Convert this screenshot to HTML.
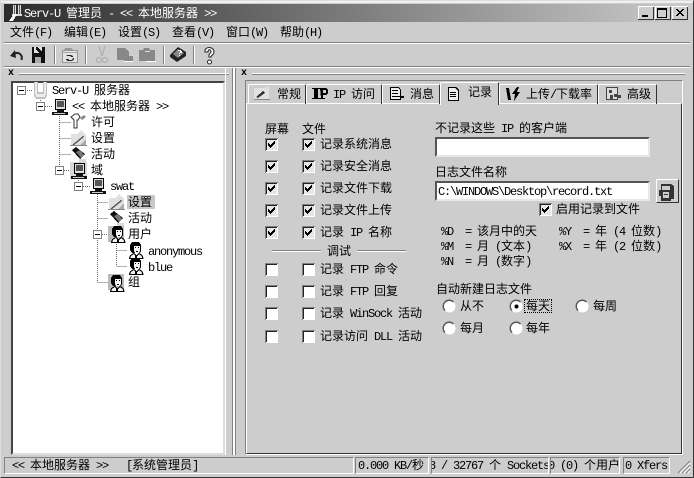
<!DOCTYPE html>
<html lang="zh"><head><meta charset="utf-8"><title>Serv-U 管理员</title>
<style>
html,body{margin:0;padding:0}
body{width:694px;height:478px;overflow:hidden;position:relative;background:#cdcdcd;font:12px "Liberation Sans","WenQuanYi Zen Hei","Noto Sans CJK SC",sans-serif;color:#000}
div{position:absolute;box-sizing:border-box}
.t{position:absolute;white-space:pre;line-height:14px;height:14px;word-spacing:2.67px}
i{font:normal 12px/14px "Liberation Mono",monospace;letter-spacing:-1.2px;word-spacing:0}
.w{color:#fff}
.ln{height:1px;background:#808080}
.lw{height:1px;background:#fff}
.inp{background:#fff;border:2px solid;border-color:#555 #e8e8e8 #e8e8e8 #555}
.tab{top:84px;height:20px;border:1px solid;border-color:#fff #333 transparent #fff;border-bottom:0;border-radius:2px 2px 0 0}
.st{top:457px;height:17px;border:1px solid;border-color:#808080 #fff #fff #808080;overflow:hidden}
svg{position:absolute;left:0;top:0}
</style></head><body>
<div style="left:0;top:0;width:694px;height:478px;border:1px solid;border-color:#ddd #333 #333 #ddd"></div>
<div style="left:1px;top:1px;width:692px;height:2px;background:#f0f0f0"></div>
<div style="left:4px;top:4px;width:686px;height:18px;background:linear-gradient(90deg,#2b2b2b,#cbcbcb)"></div>
<span class="t w" style="left:24px;top:6px"><i>Serv-U</i> 管理员 <i>- &lt;&lt;</i> 本地服务器 <i>&gt;&gt;</i></span>

<span class="t" style="left:10px;top:25px">文件<i>(F)</i></span>
<span class="t" style="left:64px;top:25px">编辑<i>(E)</i></span>
<span class="t" style="left:118px;top:25px">设置<i>(S)</i></span>
<span class="t" style="left:172px;top:25px">查看<i>(V)</i></span>
<span class="t" style="left:226px;top:25px">窗口<i>(W)</i></span>
<span class="t" style="left:280px;top:25px">帮助<i>(H)</i></span>

<div class="ln" style="left:4px;top:42px;width:686px"></div><div class="lw" style="left:4px;top:43px;width:686px"></div>
<div class="ln" style="left:4px;top:66px;width:686px"></div><div class="lw" style="left:4px;top:67px;width:686px"></div>

<!-- panel headers -->
<div class="lw" style="left:19px;top:73px;width:210px"></div><div class="ln" style="left:19px;top:74px;width:210px"></div>
<div class="lw" style="left:252px;top:73px;width:433px"></div><div class="ln" style="left:252px;top:74px;width:433px"></div>
<div style="left:232px;top:68px;width:4px;height:387px;border-left:1px solid #808080;border-right:1px solid #808080;background:#fff"></div>
<div style="left:225px;top:68px;width:1px;height:387px;background:#fff"></div>
<span class="t" style="left:8px;top:67px;font:bold 10px/14px 'Liberation Mono',monospace">x</span>
<span class="t" style="left:241px;top:67px;font:bold 10px/14px 'Liberation Mono',monospace">x</span>

<!-- tree -->
<div style="left:11px;top:81px;width:214px;height:374px;background:#fff;border:2px solid;border-color:#444 #ddd #ddd #444"></div>
<div style="left:127px;top:195px;width:28px;height:14px;background:#c8c8c8"></div>
<span class="t" style="left:52px;top:83px"><i>Serv-U</i> 服务器</span>
<span class="t" style="left:72px;top:99px"><i>&lt;&lt;</i> 本地服务器 <i>&gt;&gt;</i></span>
<span class="t" style="left:91px;top:115px">许可</span>
<span class="t" style="left:91px;top:131px">设置</span>
<span class="t" style="left:91px;top:147px">活动</span>
<span class="t" style="left:91px;top:163px">域</span>
<span class="t" style="left:110px;top:179px"><i>swat</i></span>
<span class="t" style="left:128px;top:195px">设置</span>
<span class="t" style="left:128px;top:211px">活动</span>
<span class="t" style="left:128px;top:227px">用户</span>
<span class="t" style="left:148px;top:244px"><i>anonymous</i></span>
<span class="t" style="left:148px;top:260px"><i>blue</i></span>
<span class="t" style="left:128px;top:275px">组</span>

<!-- tab page -->
<div style="left:245px;top:80px;width:438px;height:375px;border:1px solid;border-color:#808080 #fff #fff #808080"></div>
<div style="left:246px;top:103px;width:436px;height:351px;border:1px solid;border-color:#fff #333 #333 #fff"></div>
<div class="tab" style="left:248px;width:58px"></div>
<div class="tab" style="left:306px;width:76px"></div>
<div class="tab" style="left:382px;width:58px"></div>
<div class="tab" style="left:440px;top:82px;height:23px;width:59px;background:#cdcdcd"></div>
<div class="tab" style="left:499px;width:99px"></div>
<div class="tab" style="left:598px;width:59px"></div>
<span class="t" style="left:277px;top:87px">常规</span>
<span class="t" style="left:333px;top:87px"><i>IP</i> 访问</span>
<span class="t" style="left:410px;top:87px">消息</span>
<span class="t" style="left:468px;top:85px">记录</span>
<span class="t" style="left:526px;top:87px">上传<i>/</i>下载率</span>
<span class="t" style="left:627px;top:87px">高级</span>

<span class="t" style="left:265px;top:122px">屏幕</span>
<span class="t" style="left:302px;top:122px">文件</span>
<span class="t" style="left:320px;top:137px">记录系统消息</span>
<span class="t" style="left:320px;top:159px">记录安全消息</span>
<span class="t" style="left:320px;top:181px">记录文件下载</span>
<span class="t" style="left:320px;top:203px">记录文件上传</span>
<span class="t" style="left:320px;top:225px">记录 <i>IP</i> 名称</span>
<div class="ln" style="left:272px;top:250px;width:49px"></div><div class="lw" style="left:272px;top:251px;width:49px"></div>
<div class="ln" style="left:357px;top:250px;width:49px"></div><div class="lw" style="left:357px;top:251px;width:49px"></div>
<span class="t" style="left:327px;top:244px">调试</span>
<span class="t" style="left:320px;top:262px">记录 <i>FTP</i> 命令</span>
<span class="t" style="left:320px;top:284px">记录 <i>FTP</i> 回复</span>
<span class="t" style="left:320px;top:306px">记录 <i>WinSock</i> 活动</span>
<span class="t" style="left:320px;top:329px">记录访问 <i>DLL</i> 活动</span>

<span class="t" style="left:435px;top:121px">不记录这些 <i>IP</i> 的客户端</span>
<div class="inp" style="left:435px;top:137px;width:215px;height:20px"></div>
<span class="t" style="left:435px;top:165px">日志文件名称</span>
<div class="inp" style="left:435px;top:181px;width:215px;height:20px"></div>
<span class="t" style="left:438px;top:184px"><i>C:\WINDOWS\Desktop\record.txt</i></span>
<div style="left:656px;top:179px;width:23px;height:24px;border:1px solid;border-color:#fff #333 #333 #fff"></div>
<span class="t" style="left:556px;top:202px">启用记录到文件</span>

<span class="t" style="left:441px;top:224px"><i>%D  = </i>该月中的天</span>
<span class="t" style="left:441px;top:239px"><i>%M  = </i>月 <i>(</i>文本<i>)</i></span>
<span class="t" style="left:441px;top:254px"><i>%N  = </i>月 <i>(</i>数字<i>)</i></span>
<span class="t" style="left:559px;top:224px"><i>%Y  = </i>年 <i>(4 </i>位数<i>)</i></span>
<span class="t" style="left:559px;top:239px"><i>%X  = </i>年 <i>(2 </i>位数<i>)</i></span>

<span class="t" style="left:436px;top:282px">自动新建日志文件</span>
<span class="t" style="left:460px;top:299px">从不</span>
<span class="t" style="left:526px;top:299px">每天</span>
<div style="left:524px;top:299px;width:28px;height:14px;border:1px dotted #000"></div>
<span class="t" style="left:593px;top:299px">每周</span>
<span class="t" style="left:460px;top:321px">每月</span>
<span class="t" style="left:526px;top:321px">每年</span>

<!-- status -->
<div class="st" style="left:4px;width:350px"></div>
<span class="t" style="left:12px;top:458px"><i>&lt;&lt;</i> 本地服务器 <i>&gt;&gt;   [</i>系统管理员<i>]</i></span>
<div class="st" style="left:355px;width:74px"><span class="t" style="left:2px;top:0"><i>0.000 KB/</i>秒</span></div>
<div class="st" style="left:431px;width:118px"><span class="t" style="left:-3px;top:0"><i>8 / 32767 </i>个 <i>Sockets</i></span></div>
<div class="st" style="left:550px;width:70px"><span class="t" style="left:-3px;top:0"><i>0 (0) </i>个用户</span></div>
<div class="st" style="left:623px;width:47px"><span class="t" style="left:1px;top:0"><i>0 Xfers</i></span></div>

<svg width="694" height="478" viewBox="0 0 694 478" shape-rendering="crispEdges">
<defs>
<symbol id="cb" width="13" height="13" overflow="visible">
 <rect width="13" height="13" fill="#fff"/>
 <path d="M0 0h13v1H1v12H0z" fill="#808080"/><path d="M1 1h11v1H2v10H1z" fill="#222"/><path d="M12 1h1v12H1v-1h11z" fill="#fff"/>
</symbol>
<symbol id="ck" width="13" height="13" overflow="visible">
 <use href="#cb"/><rect x="2" y="2" width="10" height="10" fill="#e6e6e6"/>
 <path d="M3 5h1v3H3zM4 6h1v3H4zM5 7h1v3H5zM6 6h1v3H6zM7 5h1v3H7zM8 4h1v3H8zM9 3h1v3H9z" fill="#000"/>
</symbol>
<symbol id="rd" width="13" height="13" overflow="visible">
 <circle cx="6.5" cy="6.5" r="6" fill="#fff" shape-rendering="auto"/>
 <path d="M2 10.5A6 6 0 0 1 10.5 2" fill="none" stroke="#555" stroke-width="1.4" shape-rendering="auto"/>
</symbol>
<symbol id="mn" width="9" height="9" overflow="visible">
 <rect x=".5" y=".5" width="8" height="8" fill="#fff" stroke="#808080"/><rect x="2" y="4" width="5" height="1" fill="#000"/>
</symbol>
<symbol id="sv" width="13" height="17" overflow="visible">
 <path d="M0 0h4v10h5V0h4v14l-2 3H2L0 14z" fill="#c0c0c0"/><path d="M1 0h2v12h7V0h2v13h-1v2H2v-2H1z" fill="#ececec"/>
</symbol>
<symbol id="pc" width="16" height="17" overflow="visible">
 <path d="M3 0h11v11H3z" fill="#000"/><path d="M4 1h9v9H4z" fill="#ddd"/><path d="M5 2h7v6H5z" fill="#555"/><path d="M5 11h7v2H5zM0 13h16v3H0z" fill="#111"/><path d="M2 14h11v1H2z" fill="#ccc"/>
</symbol>
<symbol id="gear" width="17" height="17" overflow="visible">
 <path d="M1 4h6l4-4 5 5v11H1z" fill="#e0e0e0"/><path d="M9 16l7-7v7z" fill="#aaa"/><path d="M2 15l11-9 1 1-11 9z" fill="#555"/><path d="M0 15h17v1H0z" fill="#888"/>
</symbol>
<symbol id="act" width="17" height="17" overflow="visible">
 <path d="M2 4l4-3 9 7-5 5z" fill="#111"/><path d="M6 6l4-2 4 5-3 3z" fill="#777"/><path d="M9 13h7v3H9z" fill="#d8d8d8"/>
</symbol>
<symbol id="user" width="16" height="17" overflow="visible">
 <path d="M2 3l2-3h7l2 3v6l-1 2H4L2 8z" fill="#000"/><path d="M6 4h6v5l-1 2H7L6 9z" fill="#f4f4f4"/><path d="M7 5h1v1H7zM10 5h1v1h-1zM8 9h2v1H8z" fill="#000"/>
 <path d="M1.5 16.5l1-3 3.500-2 2.500 2.500 2.500-2.500 3 2 1 3z" fill="#f4f4f4" stroke="#000" stroke-width="1"/><path d="M7 13h2v3H7z" fill="#000"/>
</symbol>
</defs>

<!-- title icon -->
<path d="M13 5h3v9h-3zM18 5h3v9h-3zM12 14h10v2H12z" fill="#ddd"/><path d="M9 21l5-7h3l-4 7z" fill="#fff"/><path d="M14 5h1v9h-1zM19 5h1v9h-1z" fill="#666"/>
<!-- window buttons -->
<g>
<rect x="638" y="6" width="16" height="14" fill="#cdcdcd"/><rect x="655" y="6" width="16" height="14" fill="#cdcdcd"/><rect x="672" y="6" width="16" height="14" fill="#cdcdcd"/>
<path d="M638 6h16v1h-15v13h-1zM655 6h16v1h-15v13h-1zM672 6h16v1h-15v13h-1z" fill="#fff"/>
<path d="M653 7h1v13h-16v-1h15zM670 7h1v13h-16v-1h15zM687 7h1v13h-16v-1h15z" fill="#333"/>
<rect x="642" y="15" width="6" height="2" fill="#000"/>
<path d="M657 8h10v10h-10zM658 10v7h8v-7z" fill="#000" fill-rule="evenodd"/>
<path d="M676 9h2v1h1v1h2v-1h1v-1h2v1h-1v1h-1v1h-1v1h1v1h1v1h1v1h-2v-1h-1v-1h-2v1h-1v1h-2v-1h1v-1h1v-1h1v-1h-1v-1h-1v-1h-1z" fill="#000"/>
</g>
<!-- toolbar -->
<g shape-rendering="auto"><path d="M21.500 60C23 54 18 51 12.500 54.500" fill="none" stroke="#222" stroke-width="2"/><path d="M10 56l5-6 1 8z" fill="#222"/></g>
<path d="M32 47h13v16H32z" fill="#111"/><path d="M34 47h8v6h-8z" fill="#e0e0e0"/><path d="M35 57h6v6h-6z" fill="#aaa"/><path d="M36 47h2v1h1v1h1v1h1v1h2v3h-3v-1h-1v-1h-1v-1h-1v-1h-1z" fill="#111"/>
<rect x="54" y="46" width="1" height="18" fill="#808080"/><rect x="55" y="46" width="1" height="18" fill="#fff"/>
<path d="M62 50h2l1-2h6l2 2h5v13H62z" fill="#999"/><path d="M63 51h14v11H63z" fill="#e2e2e2"/><path d="M63 52h14v1H63z" fill="#aaa"/><path d="M66 55h5l2 1v1h-2l-1-1h-3zM74 58v1l-2 2h-4l-2-1v-1h2l1 1h3l1-2z" fill="#222"/>
<rect x="85" y="46" width="1" height="18" fill="#808080"/><rect x="86" y="46" width="1" height="18" fill="#fff"/>
<path d="M99 46l3 10M105 46l-3 10" stroke="#aaa" fill="none" shape-rendering="auto"/><circle cx="99" cy="60" r="2.500" fill="none" stroke="#aaa" shape-rendering="auto"/><circle cx="105" cy="60" r="2.500" fill="none" stroke="#aaa" shape-rendering="auto"/>
<path d="M117 48h8l4 4v4h4v5h-9v-1h-7z" fill="#888"/><path d="M124 61h9v1h-9z" fill="#fff"/>
<path d="M139 50h4l1-2h5l1 2h5v11h-16z" fill="#888"/><path d="M145 51h5v1h-5z" fill="#ddd"/><path d="M146 61h10v1h-10z" fill="#fff"/>
<rect x="163" y="46" width="1" height="18" fill="#808080"/><rect x="164" y="46" width="1" height="18" fill="#fff"/>
<g shape-rendering="auto"><path d="M170 55l8-8 8 5v4l-9 6-7-5z" fill="#222"/><path d="M173 54l5-5 6 4-6 5z" fill="#888"/></g><path d="M178 50h3v1h1v2h-2v1h-1v-1h1v-2h-2zM179 55h1v1h-1z" fill="#fff"/>
<rect x="193" y="46" width="1" height="18" fill="#808080"/><rect x="194" y="46" width="1" height="18" fill="#fff"/>
<g shape-rendering="auto"><path d="M205 52c-1-6 9-6 9 0 0 3-3 3-3 5h-2c-1-3 2-4 2-5 0-3-3-3-3 0z" fill="#fff" stroke="#222"/><circle cx="209.500" cy="62" r="2" fill="#fff" stroke="#222"/></g>

<!-- tree dotted lines -->
<g fill="none" stroke="#666" stroke-dasharray="1 1">
<path d="M25 90.500H32M40.500 98V102M45 106.500H52M59.500 112V166M59.500 122.500H71M59.500 138.500H71M59.500 154.500H71M64 170.500H71M78.500 176V182M83 186.500H90M97.500 192V282M97.500 202.500H108M97.500 218.500H108M102 234.500H108M97.500 282.500H108M116.500 242V266M116.500 250.500H127M116.500 266.500H127"/>
</g>
<use href="#mn" x="17" y="86"/><use href="#mn" x="36" y="102"/><use href="#mn" x="55" y="166"/><use href="#mn" x="74" y="182"/><use href="#mn" x="93" y="230"/>
<use href="#sv" x="34" y="82"/>
<use href="#pc" x="52" y="99"/>
<g shape-rendering="auto"><path d="M71 117l4-3h3l2 3-2 3h-1v8h-3v-8z" fill="#fff" stroke="#333"/><path d="M80 118l4-3 2 2-4 3z" fill="#888"/></g>
<use href="#gear" x="70" y="130"/><use href="#act" x="70" y="146"/>
<rect x="70" y="162" width="17" height="17" fill="#d8d8d8"/><use href="#pc" x="71" y="163"/>
<use href="#pc" x="90" y="178"/>
<use href="#gear" x="108" y="194"/><use href="#act" x="108" y="210"/>
<rect x="108" y="226" width="16" height="16" fill="#bbb"/><use href="#user" x="110" y="226"/>
<use href="#user" x="128" y="242"/><use href="#user" x="128" y="258"/>
<rect x="108" y="274" width="16" height="16" fill="#bbb"/><use href="#user" x="109" y="275"/>

<!-- tab icons -->
<path d="M254 88h10l5-2v13h-15z" fill="#e2e2e2"/><path d="M256 97l7-6 2 2-7 5z" fill="#333"/><path d="M254 99h16v1h-16z" fill="#888"/>
<path d="M312 88h8v1h-2v9h2v1h-8v-1h2v-9h-2z" fill="#000"/><path d="M320 88h6l2 2v3l-2 2h-3v3h2v1h-5v-1h1z" fill="#000"/><path d="M323 90h3v3h-3z" fill="#ccc"/>
<path d="M390 87h9l2 3v6h3v2h-3v2h-11z" fill="#000"/><path d="M391 88h7l2 2v9h-9z" fill="#eee"/><path d="M392 90h6v1h-6zM392 93h6v1h-6zM392 96h10v1h-10z" fill="#000"/>
<path d="M448 87h8l3 3v11h-11z" fill="#000"/><path d="M449 88h6l3 3v9h-9z" fill="#eee"/><path d="M450 92h6v1h-6zM450 94h6v1h-6zM450 96h6v1h-6z" fill="#000"/>
<path d="M506 88h3l2 12h-3zM517 87h2l-2 5h3l-6 9 1-7h-3z" fill="#000"/>
<path d="M606.500 87.500h11v12h-11z" fill="#ddd" stroke="#444"/><path d="M609 90h3v3h-3zM614 94h3v3h-3zM610 95h3v4h-3zM618 95h3v3h-3z" fill="#444"/>

<!-- checkboxes -->
<use href="#ck" x="265" y="138"/><use href="#ck" x="302" y="138"/>
<use href="#ck" x="265" y="160"/><use href="#ck" x="302" y="160"/>
<use href="#ck" x="265" y="182"/><use href="#ck" x="302" y="182"/>
<use href="#ck" x="265" y="204"/><use href="#ck" x="302" y="204"/>
<use href="#ck" x="265" y="226"/><use href="#ck" x="302" y="226"/>
<use href="#cb" x="265" y="263"/><use href="#cb" x="302" y="263"/>
<use href="#cb" x="265" y="285"/><use href="#cb" x="302" y="285"/>
<use href="#cb" x="265" y="307"/><use href="#cb" x="302" y="307"/>
<use href="#cb" x="265" y="330"/><use href="#cb" x="302" y="330"/>
<use href="#ck" x="539" y="203"/>

<!-- radios -->
<use href="#rd" x="443" y="300"/><use href="#rd" x="510" y="300"/><use href="#rd" x="576" y="300"/>
<use href="#rd" x="443" y="322"/><use href="#rd" x="510" y="322"/>
<circle cx="516.500" cy="306.500" r="2" fill="#000" shape-rendering="auto"/>

<!-- browse icon -->
<path d="M661 184h10l3 2v13h-3v2h-10v-5h-2v-6h2z" fill="#333"/><path d="M662 186h8v4h-8zM663 192h6v6h-6z" fill="#ccc"/><path d="M664 194h4v1h-4z" fill="#333"/>

<!-- grip -->
<g stroke="#808080" fill="none" shape-rendering="auto"><path d="M678 473L690 461M682 473L690 465M686 473L690 469"/></g>
<g stroke="#fff" fill="none" shape-rendering="auto"><path d="M680 473L690 463M684 473L690 467M688 473L690 471"/></g>
</svg>
</body></html>
